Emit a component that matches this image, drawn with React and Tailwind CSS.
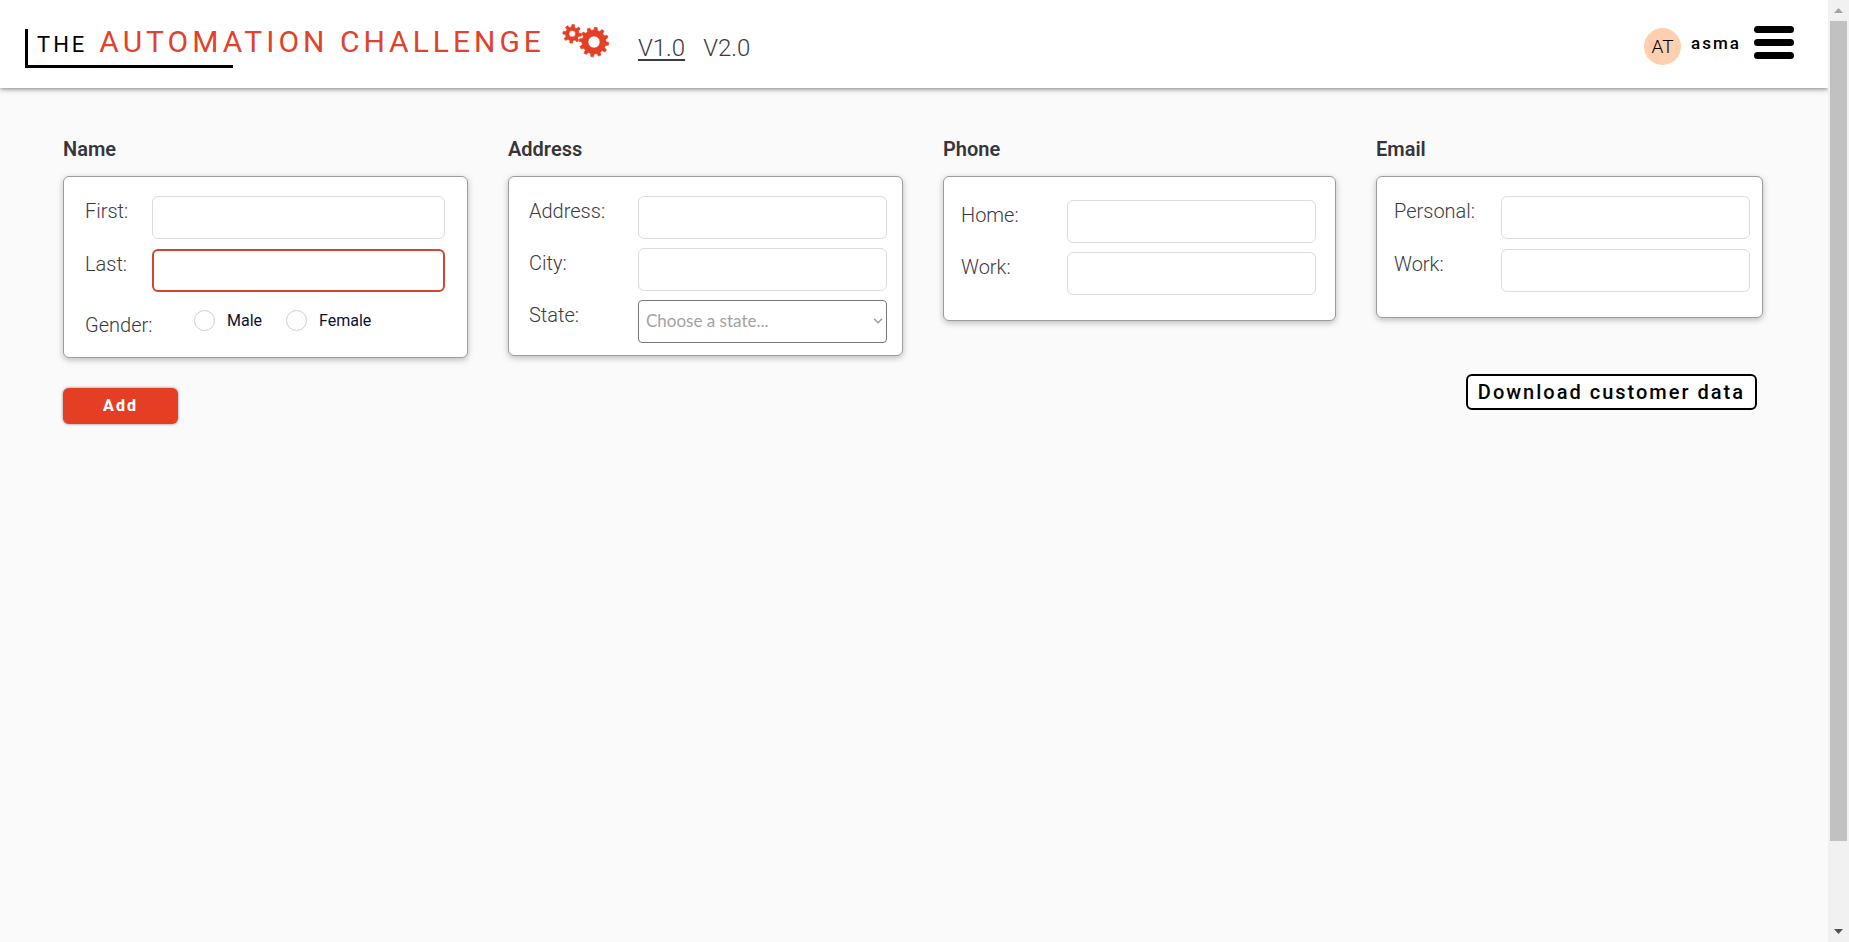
import React from "react";
import { ChevronDown } from "lucide-react";

function gearPath(cx, cy, outer, inner, hole, teeth, phase) {
  const step = (Math.PI * 2) / teeth;
  const pt = (r, a) =>
    `${(cx + r * Math.cos(a)).toFixed(2)} ${(cy + r * Math.sin(a)).toFixed(2)}`;
  const points = [];
  for (let i = 0; i < teeth; i += 1) {
    const a = phase + i * step;
    points.push(pt(inner, a - step * 0.3));
    points.push(pt(outer, a - step * 0.17));
    points.push(pt(outer, a + step * 0.17));
    points.push(pt(inner, a + step * 0.3));
  }
  return (
    `M${points.join("L")}Z` +
    `M${cx - hole} ${cy}a${hole} ${hole} 0 1 0 ${hole * 2} 0a${hole} ${hole} 0 1 0 ${-hole * 2} 0Z`
  );
}

function Gears() {
  return (
    <svg width="48" height="34" viewBox="0 0 48 34" fill="#e43f24" fillRule="evenodd" stroke="#e43f24" strokeWidth="0.6" strokeLinejoin="round" aria-hidden="true">
      <path d={gearPath(10.2, 9.8, 9.4, 6.8, 3.3, 8, 0.12)} />
      <path d={gearPath(32, 18, 14.8, 12, 6, 12, 0.13)} />
    </svg>
  );
}

function Header() {
  return (
    <header className="relative flex h-[88px] items-start justify-between bg-white pr-[34px] pl-[25px] shadow-[0_1px_5px_rgba(0,0,0,0.5)]">
      <div className="flex items-start">
        <h1 className="mt-[29px] border-l-[3px] border-black font-normal">
          <span className="flex h-9 items-baseline gap-3 pl-[9px] leading-[26px]">
            <span className="text-[22px] tracking-[3px] text-black">THE</span>
            <span className="text-[30px] tracking-[4px] text-[#e0432b]">AUTOMATION CHALLENGE</span>
          </span>
          <span className="block h-[3px] w-[205px] bg-black" />
        </h1>
        <div className="mt-6 ml-[17px]">
          <Gears />
        </div>
        <nav className="mt-9 ml-7 flex gap-[18px] text-2xl leading-[25px] font-light text-[#3a3a3f]">
          <a href="#v1" className="underline decoration-2 underline-offset-[3px]">V1.0</a>
          <a href="#v2">V2.0</a>
        </nav>
      </div>
      <div className="mt-[26px] flex items-start">
        <span className="mt-0.5 flex size-[37px] items-center justify-center rounded-full bg-[#ffcfaf] text-[19px] leading-5 font-light text-black">AT</span>
        <span className="ml-2.5 text-[17px] leading-[34px] font-medium tracking-[2px] text-black">asma</span>
        <button type="button" aria-label="Menu" className="ml-[13px] flex w-10 flex-col gap-1.5">
          <span className="h-[7px] w-full rounded-sm bg-black" />
          <span className="h-[7px] w-full rounded-sm bg-black" />
          <span className="h-[7px] w-full rounded-sm bg-black" />
        </button>
      </div>
    </header>
  );
}

function Card({ title, className, children }) {
  return (
    <section>
      <h2 className="mb-3 text-xl leading-[30px] font-semibold text-[#36363a]">{title}</h2>
      <div className={`flex flex-col rounded-md border border-[#9d9d9d] bg-white shadow-[0_2px_6px_rgba(0,0,0,0.25)] ${className}`}>
        {children}
      </div>
    </section>
  );
}

function Field({ id, label, labelWidth, invalid }) {
  return (
    <div className="flex items-start">
      <label htmlFor={id} className={`shrink-0 text-xl leading-[31px] font-light text-[#3a3a3f] ${labelWidth}`}>
        {label}
      </label>
      <input
        id={id}
        type="text"
        className={`h-[43px] w-full min-w-0 flex-1 rounded-md bg-white px-2 text-lg outline-none ${invalid ? "border-2 border-[#cf4631]" : "border border-[#dcdcdc]"}`}
      />
    </div>
  );
}

function Radio({ id, label }) {
  return (
    <span className="flex items-center gap-3">
      <input id={id} type="radio" name="gender" className="size-[21px] appearance-none rounded-full border border-[#cfcfcf] bg-white checked:border-[6px] checked:border-[#e43f24]" />
      <label htmlFor={id} className="text-base leading-5 text-[#0a1035]">{label}</label>
    </span>
  );
}

function Scrollbar() {
  return (
    <div aria-hidden="true" className="sticky top-0 flex h-screen w-[21px] shrink-0 flex-col items-center bg-[#f1f1f1]">
      <div className="flex h-[21px] w-full shrink-0 items-center justify-center">
        <svg width="9" height="5" viewBox="0 0 9 5" fill="#a3a3a3"><path d="M0 5L4.500 0L9 5Z" /></svg>
      </div>
      <div className="mb-20 w-[17px] flex-1 bg-[#c1c1c1]" />
      <div className="flex h-[21px] w-full shrink-0 items-center justify-center">
        <svg width="9" height="5" viewBox="0 0 9 5" fill="#505050"><path d="M0 0L4.500 5L9 0Z" /></svg>
      </div>
    </div>
  );
}

export default function App() {
  return (
    <div className="flex min-h-screen bg-[#fafafa] font-[Roboto,sans-serif]">
      <div className="min-w-0 flex-1">
        <Header />
        <main className="pt-[46px] pr-[65px] pl-[63px]">
          <div className="grid grid-cols-[405fr_395fr_393fr_387fr] items-start gap-10">
            <Card title="Name" className="h-[182px] gap-2.5 pt-[19px] pr-[22px] pl-[21px]">
              <Field id="first" label="First:" labelWidth="w-[67px]" />
              <Field id="last" label="Last:" labelWidth="w-[67px]" invalid />
              <div className="flex items-start pt-2">
                <span className="w-[109px] text-xl leading-[30px] font-light text-[#3a3a3f]">Gender:</span>
                <div className="flex gap-6">
                  <Radio id="male" label="Male" />
                  <Radio id="female" label="Female" />
                </div>
              </div>
            </Card>
            <Card title="Address" className="h-[180px] gap-[9px] pt-[19px] pr-[15px] pl-5">
              <Field id="address" label="Address:" labelWidth="w-[109px]" />
              <Field id="city" label="City:" labelWidth="w-[109px]" />
              <div className="flex items-start">
                <label htmlFor="state" className="w-[109px] shrink-0 text-xl leading-[31px] font-light text-[#3a3a3f]">State:</label>
                <div className="relative min-w-0 flex-1">
                  <select id="state" defaultValue="" className="block h-[43px] w-full appearance-none rounded-sm border border-[#777777] bg-white px-[7px] pb-0.5 font-[Lato,sans-serif] text-[17px] text-[#a3a3a3]">
                    <option value="">Choose a state...</option>
                  </select>
                  <ChevronDown size={14} strokeWidth={3} className="pointer-events-none absolute top-[14px] right-0.5 text-[#a3a3a3]" />
                </div>
              </div>
            </Card>
            <Card title="Phone" className="h-[145px] gap-[9px] pt-[23px] pr-[19px] pl-[17px]">
              <Field id="home" label="Home:" labelWidth="w-[106px]" />
              <Field id="phone-work" label="Work:" labelWidth="w-[106px]" />
            </Card>
            <Card title="Email" className="h-[142px] gap-2.5 pt-[19px] pr-3 pl-[17px]">
              <Field id="personal" label="Personal:" labelWidth="w-[107px]" />
              <Field id="email-work" label="Work:" labelWidth="w-[107px]" />
            </Card>
          </div>
          <div className="mt-4 flex items-start justify-between pr-1.5">
            <button type="button" className="mt-[14px] h-9 w-[115px] rounded-md bg-[#e43f24] text-base font-extrabold tracking-[2px] text-white shadow-[0_0_3px_rgba(0,0,0,0.5)]">
              Add
            </button>
            <button type="button" className="h-9 rounded-md border-2 border-black bg-white px-2.5 text-xl leading-8 font-medium tracking-[2px] text-black">
              Download customer data
            </button>
          </div>
        </main>
      </div>
      <Scrollbar />
    </div>
  );
}
